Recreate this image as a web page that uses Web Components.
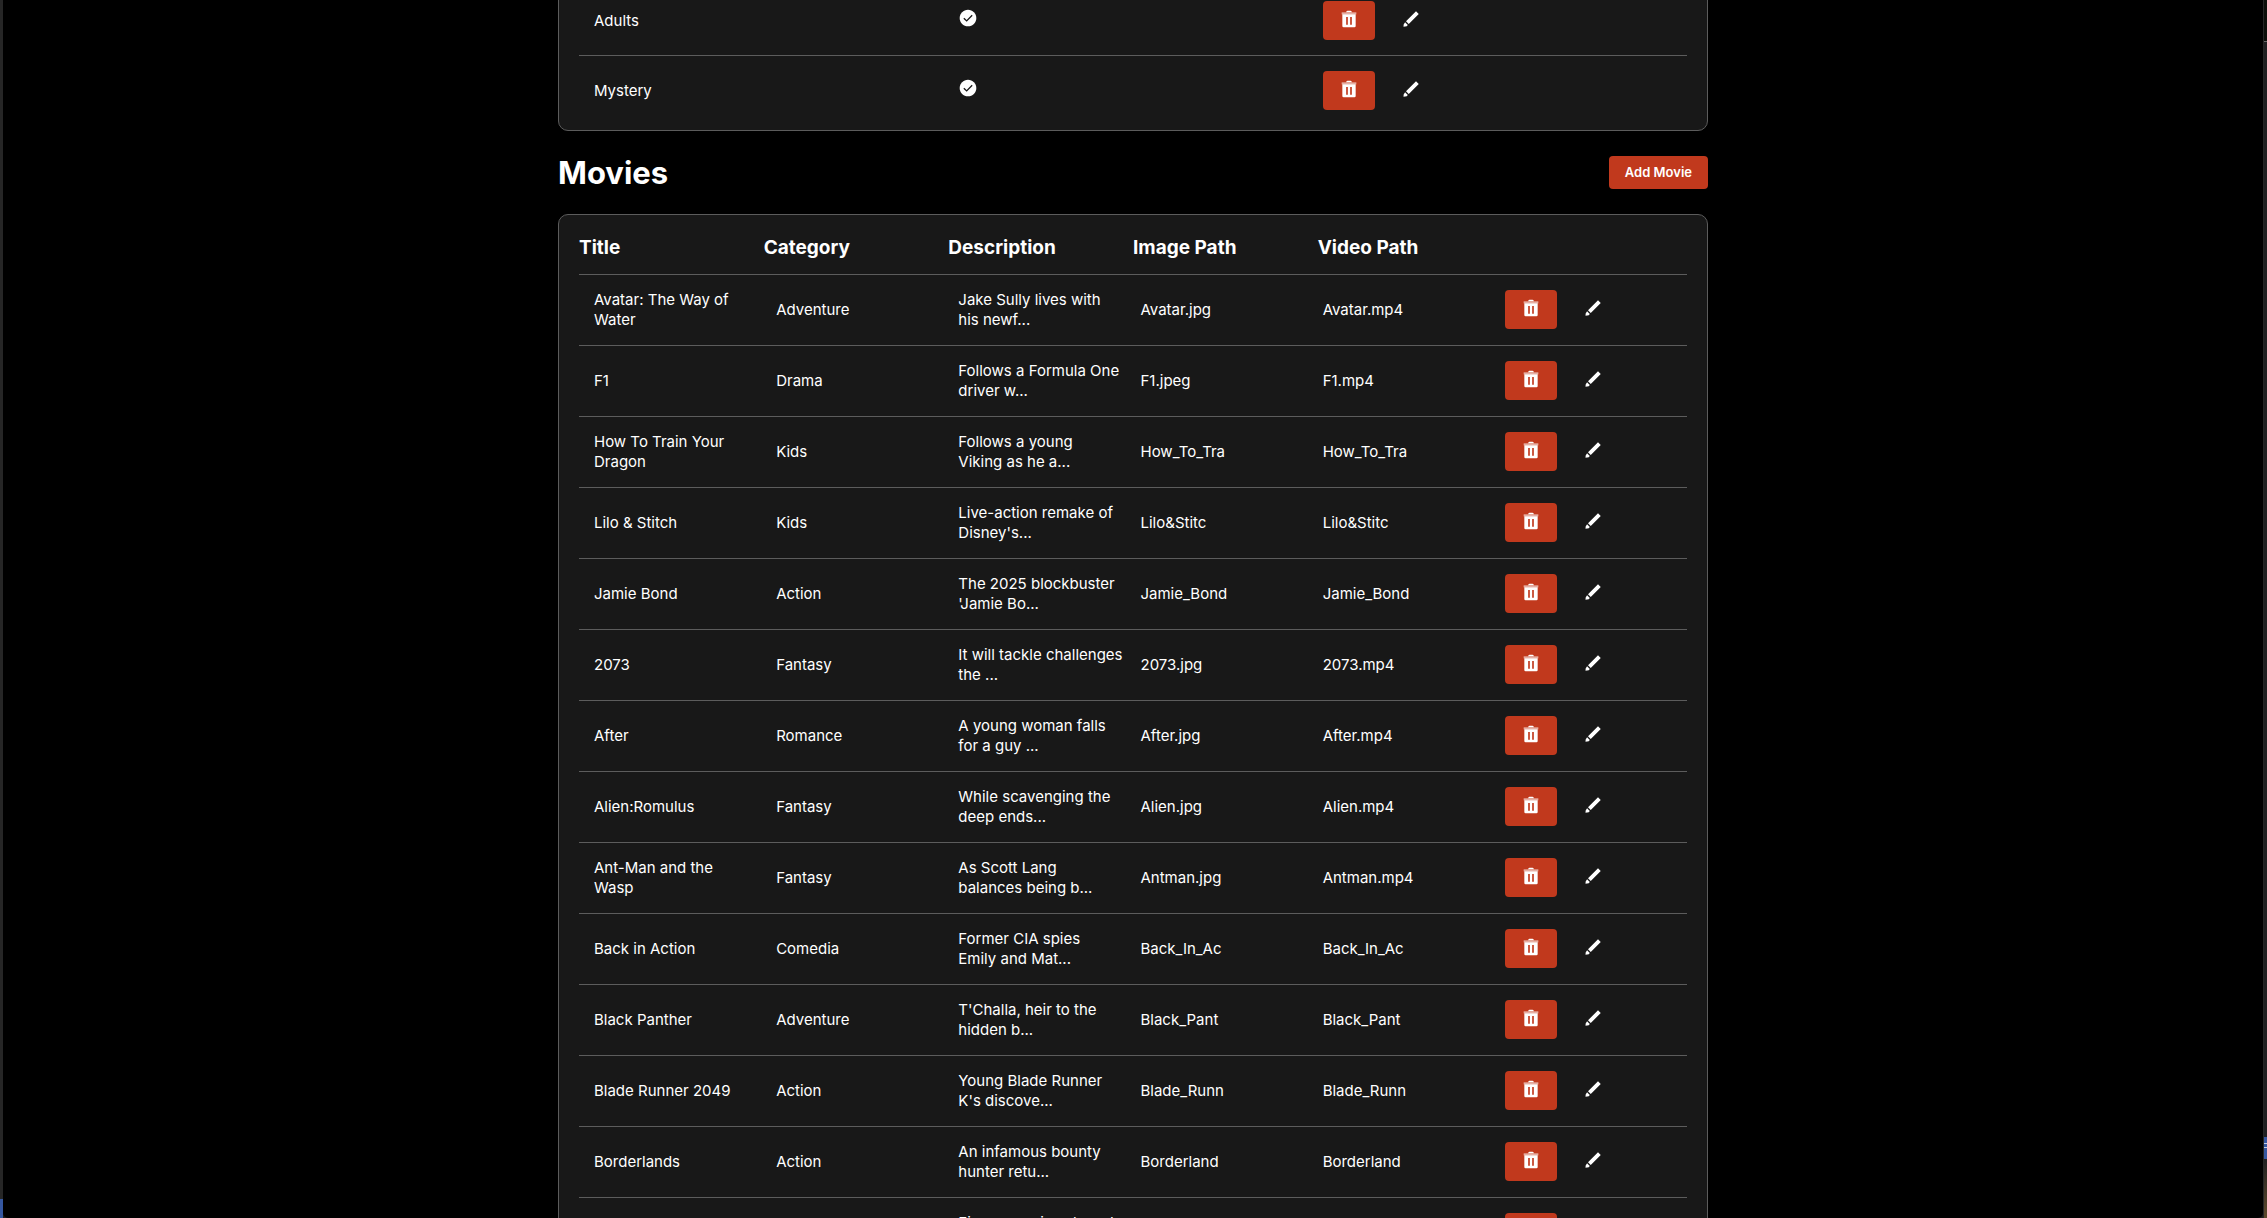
<!DOCTYPE html>
<html lang="en">
<head>
<meta charset="utf-8">
<title>Movies admin</title>
<style>
body { margin: 0; height: 100vh; overflow: hidden; background: #141414; font-family: Inter, "Noto Sans", sans-serif; font-size: 15px; line-height: 20px; color: #fff; }
</style>
</head>
<body>
<admin-page></admin-page>
<script>
const ICONS = {
  check: '<path d="M12 2C6.48 2 2 6.48 2 12s4.48 10 10 10 10-4.48 10-10S17.52 2 12 2z"/><path d="M7 12.2l3.4 3.3L17 8.7" fill="none" stroke="#181818" stroke-width="1.6"/>',
  trash: '<path d="M3.2 4h17.600v2.500H3.200z" opacity=".6"/><path d="M8.500 4V3.200l1.500-1.200h4l1.500 1.200V4zM4 6.300h16V20.500q0 1.500-1.500 1.500h-13Q4 22 4 20.500zM8.600 9.500v9.500h2V9.500zm4.800 0v9.500h2V9.500z" fill-rule="evenodd"/>',
  edit: '<path d="M18 2.700L21.300 6 9.300 18 6 14.700zM4.900 15.800L8.200 19.100 6.900 20.600 3 21.300 3.200 18.500z"/>'
};
const MOVIES = [
  ["Avatar: The Way of\nWater", "Adventure", "Jake Sully lives with\nhis newf...", "Avatar.jpg", "Avatar.mp4"],
  ["F1", "Drama", "Follows a Formula One\ndriver w...", "F1.jpeg", "F1.mp4"],
  ["How To Train Your\nDragon", "Kids", "Follows a young\nViking as he a...", "How_To_Tra", "How_To_Tra"],
  ["Lilo & Stitch", "Kids", "Live-action remake of\nDisney's...", "Lilo&Stitc", "Lilo&Stitc"],
  ["Jamie Bond", "Action", "The 2025 blockbuster\n'Jamie Bo...", "Jamie_Bond", "Jamie_Bond"],
  ["2073", "Fantasy", "It will tackle challenges\nthe ...", "2073.jpg", "2073.mp4"],
  ["After", "Romance", "A young woman falls\nfor a guy ...", "After.jpg", "After.mp4"],
  ["Alien:Romulus", "Fantasy", "While scavenging the\ndeep ends...", "Alien.jpg", "Alien.mp4"],
  ["Ant-Man and the\nWasp", "Fantasy", "As Scott Lang\nbalances being b...", "Antman.jpg", "Antman.mp4"],
  ["Back in Action", "Comedia", "Former CIA spies\nEmily and Mat...", "Back_In_Ac", "Back_In_Ac"],
  ["Black Panther", "Adventure", "T'Challa, heir to the\nhidden b...", "Black_Pant", "Black_Pant"],
  ["Blade Runner 2049", "Action", "Young Blade Runner\nK's discove...", "Blade_Runn", "Blade_Runn"],
  ["Borderlands", "Action", "An infamous bounty\nhunter retu...", "Borderland", "Borderland"],
  ["", "", "Five scenarios shared", "", ""]
];
const esc = s => s.replace(/&/g, "&amp;");

class AppIcon extends HTMLElement {
  connectedCallback() {
    this.attachShadow({ mode: "open" }).innerHTML =
      `<style>:host{display:block;width:20px;height:20px}svg{display:block;width:100%;height:100%;fill:currentColor}</style><svg viewBox="0 0 24 24" aria-hidden="true">${ICONS[this.getAttribute("name")]}</svg>`;
  }
}
customElements.define("app-icon", AppIcon);

class AppButton extends HTMLElement {
  connectedCallback() {
    this.attachShadow({ mode: "open" }).innerHTML =
      `<style>
        :host{display:block;white-space:normal}
        button{display:block;border:0;margin:0;padding:8px 16px;border-radius:4px;background:#c1391d;color:#fff;font:600 13px/17px Inter,"Noto Sans",sans-serif;cursor:pointer}
        :host([icon]) button{padding-bottom:11px}
        :host([plain]) button{background:none}
      </style><button type="button"><slot></slot></button>`;
    const label = this.getAttribute("label");
    if (label) this.shadowRoot.querySelector("button").setAttribute("aria-label", label);
  }
}
customElements.define("app-button", AppButton);

class AdminPanel extends HTMLElement {
  connectedCallback() {
    this.attachShadow({ mode: "open" }).innerHTML =
      `<style>:host{display:block;box-sizing:border-box;border:1px solid #5c5c5c;border-radius:10px;background:#181818;padding:0 20px 5px}</style><slot></slot>`;
  }
}
customElements.define("admin-panel", AdminPanel);

const ACTIONS = `<td class="actions"><app-button icon label="Delete"><app-icon name="trash"></app-icon></app-button><app-button icon plain label="Edit"><app-icon name="edit"></app-icon></app-button></td>`;
const TABLE_CSS = `
  :host{display:block}
  table,thead,tbody{display:block}
  tr{display:grid;border-bottom:1px solid #5c5c5c}
  tbody tr{gap:15px;padding:15px;align-items:center}
  tbody tr:last-child{border-bottom:0}
  th,td{padding:0;text-align:left;min-width:0}
  .actions{display:flex;gap:10px;align-self:start}`;

class CategoryTable extends HTMLElement {
  connectedCallback() {
    this.attachShadow({ mode: "open" }).innerHTML =
      `<style>${TABLE_CSS} tr{grid-template-columns:repeat(3,minmax(0,1fr))} .state{align-self:start;padding-top:7px}</style>
      <table><tbody>${["Adults", "Mystery"].map(n => `<tr><td>${n}</td><td class="state"><app-icon name="check"></app-icon></td>${ACTIONS}</tr>`).join("")}</tbody></table>`;
  }
}
customElements.define("category-table", CategoryTable);

class MovieTable extends HTMLElement {
  connectedCallback() {
    this.attachShadow({ mode: "open" }).innerHTML =
      `<style>${TABLE_CSS}
        tr{grid-template-columns:repeat(6,minmax(0,1fr))}
        thead tr{padding:21px 0 14px}
        th{font-size:19px;line-height:24px;font-weight:700}
        td{white-space:pre-line}
        tbody tr:last-child{align-items:start}
      </style>
      <table><thead><tr>${["Title", "Category", "Description", "Image Path", "Video Path", ""].map(h => `<th>${h}</th>`).join("")}</tr></thead>
      <tbody>${MOVIES.map(m => `<tr>${m.map(c => `<td>${esc(c)}</td>`).join("")}${ACTIONS}</tr>`).join("")}</tbody></table>`;
  }
}
customElements.define("movie-table", MovieTable);

class SectionHeader extends HTMLElement {
  connectedCallback() {
    this.attachShadow({ mode: "open" }).innerHTML =
      `<style>:host{display:flex;justify-content:space-between;align-items:center;margin:25px 0}h2{margin:0;font-size:31px;line-height:33px;font-weight:700}</style>
       <h2><slot></slot></h2><slot name="action"></slot>`;
  }
}
customElements.define("section-header", SectionHeader);

class AdminPage extends HTMLElement {
  connectedCallback() {
    this.attachShadow({ mode: "open" }).innerHTML =
      `<style>
        :host{display:grid;grid-template-columns:3px minmax(0,1fr) 1px 3px;height:100vh;overflow:hidden;background:#1c1c1c}
        .view{overflow:hidden;background:#000;border-radius:0 0 5px 5px;min-height:0}
        .left{background:linear-gradient(0deg,#3557a0 19px,#262626 19px)}
        .rim{background:#262626}
        .right{background:
          linear-gradient(#3557a0 6px,#c5cfe4 6px 7px,#3557a0 7px 10px,#c5cfe4 10px 11px,#3557a0 11px) 0 1137px/100% 22px no-repeat,
          linear-gradient(transparent 1159px,#5e4a2c) no-repeat,
          linear-gradient(#0c0f0a 41px,#6a6a6a 41px 42px,#1f2021 42px)}
        main{max-width:1150px;margin:-15px auto 0}
      </style>
      <div class="left"></div>
      <div class="view"><main>
        <admin-panel><category-table></category-table></admin-panel>
        <section-header>Movies<app-button slot="action">Add Movie</app-button></section-header>
        <admin-panel><movie-table></movie-table></admin-panel>
      </main></div>
      <div class="rim"></div>
      <div class="right"></div>`;
  }
}
customElements.define("admin-page", AdminPage);
</script>
</body>
</html>
